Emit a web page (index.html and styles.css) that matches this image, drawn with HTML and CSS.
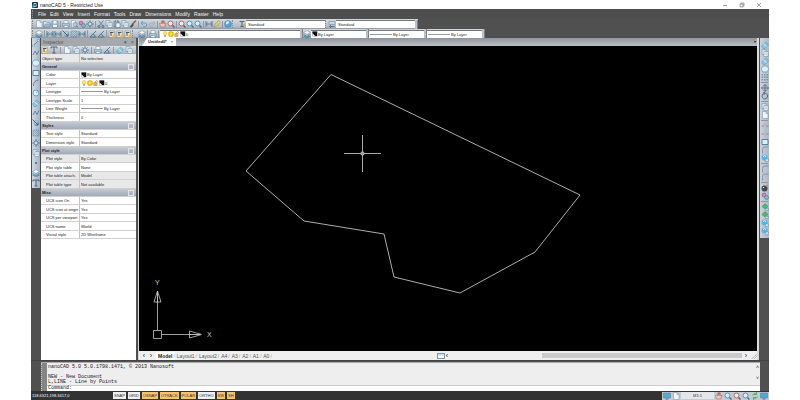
FILE: index.html
```html
<!DOCTYPE html>
<html lang="en">
<head>
<meta charset="utf-8">
<title>nanoCAD 5 - Restricted Use</title>
<link rel="stylesheet" href="styles.css">
</head>
<body>
<svg class="sprite" aria-hidden="true">
  <symbol id="page" viewBox="0 0 16 16"><path d="M3 1h7l4 4v10H3z" fill="#fff" stroke="#5b7f9c"/><path d="M10 1v4h4" fill="none" stroke="#5b7f9c"/></symbol>
  <symbol id="open" viewBox="0 0 16 16"><path d="M1 14V3h5l2 2h6v9z" fill="#dcebf5" stroke="#526f88"/><path d="M1 14l4-6h11l-3 6z" fill="#8fc3df" stroke="#526f88"/></symbol>
  <symbol id="save" viewBox="0 0 16 16"><path d="M2 2h12v12H2z" fill="#8dbad8" stroke="#48667e"/><path d="M5 2h6v5H5zM4 10h8v4H4z" fill="#fff"/></symbol>
  <symbol id="print" viewBox="0 0 16 16"><path d="M4 7V1h8v6" fill="#fff" stroke="#55758f"/><path d="M1 7h14v6H1z" fill="#9cc8e0" stroke="#55758f"/><path d="M4 11h8v4H4z" fill="#fff" stroke="#55758f"/></symbol>
  <symbol id="preview" viewBox="0 0 16 16"><path d="M3 1h8v13H3z" fill="#fff" stroke="#6b8ba5"/><circle cx="10" cy="9" r="4" fill="#a6d9f2" stroke="#456"/><path d="M13 12l3 3" stroke="#456" stroke-width="2"/></symbol>
  <symbol id="globe" viewBox="0 0 16 16"><circle cx="8" cy="8" r="7" fill="#3c9cdd" stroke="#2673ac"/><path d="M4 4q4-3 7 0l-3 4-4 1z" fill="#d5f0ff"/></symbol>
  <symbol id="palette" viewBox="0 0 16 16"><circle cx="6" cy="6" r="4" fill="#d878b0" stroke="#725"/><circle cx="11" cy="11" r="4" fill="#76b5da" stroke="#257"/></symbol>
  <symbol id="gear" viewBox="0 0 16 16"><circle cx="8" cy="8" r="4" fill="#cce5f2" stroke="#4f7692" stroke-width="2"/><path d="M8 0v4M8 12v4M0 8h4M12 8h4M3 3l2 2M11 11l2 2M13 3l-2 2M5 11l-2 2" stroke="#4f7692" stroke-width="2"/></symbol>
  <symbol id="cut" viewBox="0 0 16 16"><path d="M3 1l8 10M13 1L5 11" stroke="#4b80a5" stroke-width="2"/><circle cx="4" cy="13" r="2" fill="none" stroke="#315b7e" stroke-width="2"/><circle cx="12" cy="13" r="2" fill="none" stroke="#315b7e" stroke-width="2"/></symbol>
  <symbol id="copy" viewBox="0 0 16 16"><path d="M2 1h8v10H2z" fill="#d8eefb" stroke="#4d7898"/><path d="M6 5h8v10H6z" fill="#fff" stroke="#4d7898"/><path d="M8 8h4M8 11h4" stroke="#6ba4c8"/></symbol>
  <symbol id="paste" viewBox="0 0 16 16"><path d="M2 2h10v12H2z" fill="#72b8dd" stroke="#456"/><path d="M6 6h8v9H6z" fill="#fff" stroke="#456"/><path d="M5 0h4v4H5z" fill="#ddd" stroke="#456"/></symbol>
  <symbol id="brush" viewBox="0 0 16 16"><path d="M14 1L7 8" stroke="#704532" stroke-width="3"/><path d="M7 7l3 3-5 5-4-1z" fill="#333"/></symbol>
  <symbol id="undo" viewBox="0 0 16 16"><path d="M6 2L2 6l4 4M2 6h8q5 1 3 6-2 3-7 2" fill="none" stroke="#4a97c4" stroke-width="2"/></symbol>
  <symbol id="redo" viewBox="0 0 16 16"><path d="M10 2l4 4-4 4M14 6H6q-5 1-3 6 2 3 7 2" fill="none" stroke="#9caab5" stroke-width="2"/></symbol>
  <symbol id="zoomred" viewBox="0 0 16 16"><circle cx="7" cy="7" r="5" fill="#eef6fa" stroke="#a95757" stroke-width="2"/><path d="M11 11l4 4" stroke="#713a40" stroke-width="3"/></symbol>
  <symbol id="zoom" viewBox="0 0 16 16"><circle cx="7" cy="7" r="5" fill="#e1f5ff" stroke="#4089b2" stroke-width="2"/><path d="M11 11l4 4" stroke="#315f7c" stroke-width="3"/></symbol>
  <symbol id="hand" viewBox="0 0 16 16"><path d="M3 14L1 7l2-1 2 2V2h2v5-6h2v6-5h2v6l3-2-2 8z" fill="#f4c7ac" stroke="#9d4543"/></symbol>
  <symbol id="dim" viewBox="0 0 16 16"><path d="M2 2v12M14 2v12M2 8h12M5 5L2 8l3 3M11 5l3 3-3 3" fill="none" stroke="#426e91" stroke-width="2"/></symbol>
  <symbol id="pencil" viewBox="0 0 16 16"><path d="M2 14l1-4 8-9 4 3-9 9z" fill="#f5d24d" stroke="#866828"/></symbol>
  <symbol id="textstyle" viewBox="0 0 16 16"><path d="M3 3h10M8 3v10M5 13h6" stroke="#344c61" stroke-width="2"/><path d="M11 9l4 4" stroke="#d29a34" stroke-width="3"/></symbol>
  <symbol id="dimstyle" viewBox="0 0 16 16"><path d="M2 3h12v6H2z" fill="#c9dce9" stroke="#527088"/><path d="M3 13h10M6 11l-3 2 3 2" fill="none" stroke="#3f5f79" stroke-width="2"/></symbol>
  <symbol id="layers" viewBox="0 0 16 16"><path d="M1 5l7-4 7 4-7 4z" fill="#fff" stroke="#4e7895"/><path d="M1 9l7 4 7-4M1 12l7 3 7-3" fill="none" stroke="#347da9" stroke-width="2"/></symbol>
  <symbol id="angle" viewBox="0 0 16 16"><path d="M14 2L2 14h13M8 8q4 1 4 6" fill="none" stroke="#3d6788" stroke-width="2"/></symbol>
  <symbol id="radius" viewBox="0 0 16 16"><circle cx="9" cy="8" r="5" fill="none" stroke="#76aacb" stroke-width="2"/><path d="M1 1l11 11M12 7v5H7" fill="none" stroke="#334f69" stroke-width="2"/></symbol>
  <symbol id="hatch" viewBox="0 0 16 16"><path d="M2 2h12v12H2zM2 6l4-4M2 10l8-8M2 14L14 2M6 14l8-8M10 14l4-4" fill="none" stroke="#477aa0"/></symbol>
  <symbol id="docgold" viewBox="0 0 16 16"><path d="M2 2h11v13H2z" fill="#fff4c7" stroke="#687782"/><path d="M4 5h7M6 5v7" stroke="#334" stroke-width="2"/><path d="M9 9h6v6H9z" fill="#edb83f"/></symbol>
  <symbol id="line" viewBox="0 0 16 16"><path d="M3 13L13 3" stroke="#4b7b9d" stroke-width="2"/><path d="M1 12h4v4H1zM11 1h4v4h-4z" fill="#bfe8fa" stroke="#678ca5"/></symbol>
  <symbol id="poly" viewBox="0 0 16 16"><path d="M2 12L6 4l4 7 4-8" fill="none" stroke="#47799c" stroke-width="2"/></symbol>
  <symbol id="hex" viewBox="0 0 16 16"><path d="M4 2h8l4 6-4 6H4L0 8z" fill="#e5f8ff" stroke="#69a4c8" stroke-width="2"/></symbol>
  <symbol id="rect" viewBox="0 0 16 16"><path d="M2 3h12v10H2z" fill="#e5f8ff" stroke="#456f90" stroke-width="2"/></symbol>
  <symbol id="arc" viewBox="0 0 16 16"><path d="M3 14Q2 4 13 2" fill="none" stroke="#668" stroke-width="2"/></symbol>
  <symbol id="circle" viewBox="0 0 16 16"><circle cx="8" cy="8" r="6" fill="#e8faff" stroke="#4c9bc4" stroke-width="2"/><path d="M8 8l4-3" stroke="#456"/></symbol>
  <symbol id="dot" viewBox="0 0 16 16"><circle cx="8" cy="8" r="2" fill="#345"/></symbol>
  <symbol id="text" viewBox="0 0 16 16"><path d="M2 5V2h12v3M8 2v12M5 14h6" fill="none" stroke="#344b61" stroke-width="2"/></symbol>
  <symbol id="move" viewBox="0 0 16 16"><path d="M8 1v14M1 8h14M5 4l3-3 3 3M5 12l3 3 3-3M4 5L1 8l3 3M12 5l3 3-3 3" fill="none" stroke="#4c6077" stroke-width="2"/></symbol>
  <symbol id="rotate" viewBox="0 0 16 16"><path d="M11 3q5 5 0 10-7 3-9-4-1-6 6-7M4 0l5 2-4 4" fill="none" stroke="#405b74" stroke-width="2"/></symbol>
  <symbol id="erase" viewBox="0 0 16 16"><path d="M1 10L9 2l6 5-7 8H4z" fill="#75c7eb" stroke="#537f9b"/><path d="M5 6l6 5" stroke="#fff" stroke-width="2"/></symbol>
  <symbol id="array" viewBox="0 0 16 16"><path d="M1 2h3v3H1zM6 2h3v3H6zM11 2h3v3h-3zM1 7h3v3H1zM6 7h3v3H6zM11 7h3v3h-3zM1 12h3v3H1zM6 12h3v3H6zM11 12h3v3h-3z" fill="#718ba1"/></symbol>
  <symbol id="trim" viewBox="0 0 16 16"><path d="M1 8h5M10 8h5" stroke="#b66c75" stroke-width="2"/><path d="M8 1v14" stroke="#8daabd"/></symbol>
  <symbol id="fillet" viewBox="0 0 16 16"><path d="M3 15V7q0-5 5-5h7" fill="none" stroke="#778ba0" stroke-width="2"/><path d="M3 2h4" stroke="#aaa"/></symbol>
  <symbol id="bomb" viewBox="0 0 16 16"><circle cx="7" cy="9" r="6" fill="#222b32"/><path d="M10 5l4-3" stroke="#db6c2c" stroke-width="3"/><circle cx="5" cy="7" r="1.5" fill="#fff"/></symbol>
  <symbol id="green" viewBox="0 0 16 16"><path d="M8 1l6 6-6 5-6-5z" fill="#32b454" stroke="#1c7b37"/><path d="M9 11h6v4H9z" fill="#b9def0" stroke="#57819c"/></symbol>
  <symbol id="bluebox" viewBox="0 0 16 16"><circle cx="7" cy="7" r="6" fill="#49aee0"/><path d="M4 5q3-4 6 0" fill="none" stroke="#fff" stroke-width="2"/><path d="M9 10h6v5H9z" fill="#d9eefa" stroke="#57819c"/></symbol>
  <symbol id="refresh" viewBox="0 0 16 16"><path d="M3 7q2-6 8-3M13 9q-2 6-8 3M11 0v5H6M5 16v-5h5" fill="none" stroke="#3ba352" stroke-width="2"/></symbol>
  <symbol id="monitor" viewBox="0 0 16 16"><path d="M1 2h14v10H1z" fill="#3c9ed5" stroke="#35657f"/><path d="M5 14h6" stroke="#456" stroke-width="2"/></symbol>
  <symbol id="bulb" viewBox="0 0 16 16"><circle cx="8" cy="6" r="5" fill="#ffe76a" stroke="#c7a52d"/><path d="M6 11h4v4H6z" fill="#777"/></symbol>
  <symbol id="sun" viewBox="0 0 16 16"><circle cx="8" cy="8" r="6" fill="#ffe44b" stroke="#e1a900" stroke-width="3"/></symbol>
  <symbol id="lock" viewBox="0 0 16 16"><path d="M7 8V4q3-5 6 0v2" fill="none" stroke="#9a7740" stroke-width="2"/><path d="M2 7h9v8H2z" fill="#e9b75e" stroke="#97642b"/></symbol>
  <symbol id="swatch" viewBox="0 0 16 16"><path d="M1 1h13v13H1z" fill="#111"/><path d="M1 6l8 8H1z" fill="#fff"/></symbol>
</svg>

<div class="app">
  <header class="titlebar">
    <svg class="logo" viewBox="0 0 16 16" aria-hidden="true"><rect width="16" height="16" rx="2" fill="#17384f"/><path d="M5 4h6v8H5z" fill="none" stroke="#d9f2ff" stroke-width="2"/><path d="M1 9h5v6H1z" fill="#39a6d9"/></svg>
    <h1>nanoCAD 5 - Restricted Use</h1>
    <div class="window-buttons">
      <button aria-label="Minimize"><svg viewBox="0 0 6 6"><path d="M1 3.500h4"/></svg></button>
      <button aria-label="Restore"><svg viewBox="0 0 6 6"><path d="M1 2h3v3H1zM2 2V1h3v3H4"/></svg></button>
      <button aria-label="Close"><svg viewBox="0 0 6 6"><path d="M1 1l4 4M5 1L1 5"/></svg></button>
    </div>
  </header>

  <nav class="menu">
    <span class="grip"></span>
    <button>File</button><button>Edit</button><button>View</button><button>Insert</button><button>Format</button><button>Tools</button><button>Draw</button><button>Dimensions</button><button>Modify</button><button>Raster</button><button>Help</button>
  </nav>

  <div class="toolbars">
    <div class="toolbar">
      <span class="grip"></span>
      <div class="tools" data-tools="page open save | print preview palette gear | cut copy paste copy brush | undo redo | hand zoomred | zoomred zoom zoom | dim pencil | globe"></div>
      <span class="grip wide"></span>
      <div class="tools" data-tools="textstyle"></div>
      <select class="combo style" aria-label="Text style"><option>Standard</option></select>
      <span class="grip"></span>
      <div class="tools" data-tools="dimstyle"></div>
      <select class="combo style" aria-label="Dimension style"><option>Standard</option></select>
      <span class="cap"></span>
    </div>
    <div class="toolbar">
      <span class="grip"></span>
      <div class="tools" data-tools="layers | dim dim radius hatch dim | angle angle | docgold docgold docgold"></div>
      <span class="grip wide"></span>
      <div class="tools" data-tools="layers | print |"></div>
      <label class="combo layer">
        <svg><use href="#bulb"/></svg><svg><use href="#sun"/></svg><svg><use href="#lock"/></svg><svg><use href="#swatch"/></svg>
        <select aria-label="Layer"><option>0</option></select>
      </label>
      <span class="cap"></span>
      <div class="tools" data-tools="layers"></div>
      <label class="combo prop"><svg><use href="#swatch"/></svg><select aria-label="Color"><option>By Layer</option></select></label>
      <span class="cap"></span>
      <label class="combo prop"><span class="rule"></span><select aria-label="Linetype"><option>By Layer</option></select></label>
      <span class="cap"></span>
      <label class="combo prop"><span class="rule"></span><select aria-label="Line weight"><option>By Layer</option></select></label>
      <span class="cap"></span>
    </div>
  </div>

  <main class="work">
    <div class="rail"><div class="tools" data-tools="line poly hex rect arc circle erase poly radius hatch gear copy dot layers text"></div></div>

    <aside class="inspector">
      <header><h2>Inspector</h2><button aria-label="Pin">&#9662;</button><button aria-label="Close inspector">&#215;</button></header>
      <div class="tools inspector-tools" data-tools="docgold text | page copy gear | print angle | erase copy"></div>
      <table>
        <tbody class="shade"><tr><th>Object type</th><td>No selection</td></tr></tbody>
        <tbody>
          <tr class="group"><th colspan="2"><div>General</div></th></tr>
          <tr><th>Color</th><td><div><svg><use href="#swatch"/></svg>By Layer</div></td></tr>
          <tr><th>Layer</th><td><div><svg><use href="#bulb"/></svg><svg><use href="#sun"/></svg><svg><use href="#lock"/></svg><svg><use href="#swatch"/></svg>0</div></td></tr>
          <tr><th>Linetype</th><td><div><span class="rule"></span>By Layer</div></td></tr>
          <tr><th>Linetype Scale</th><td>1</td></tr>
          <tr><th>Line Weight</th><td><div><span class="rule"></span>By Layer</div></td></tr>
          <tr><th>Thickness</th><td>0</td></tr>
        </tbody>
        <tbody>
          <tr class="group"><th colspan="2"><div>Styles</div></th></tr>
          <tr><th>Text style</th><td>Standard</td></tr>
          <tr><th>Dimension style</th><td>Standard</td></tr>
        </tbody>
        <tbody>
          <tr class="group"><th colspan="2"><div>Plot style</div></th></tr>
          <tr class="shade"><th>Plot style</th><td>By Color</td></tr>
          <tr><th>Plot style table</th><td>None</td></tr>
          <tr class="shade"><th>Plot table attach.</th><td>Model</td></tr>
          <tr class="shade"><th>Plot table type</th><td>Not available</td></tr>
        </tbody>
        <tbody>
          <tr class="group"><th colspan="2"><div>Misc</div></th></tr>
          <tr><th>UCS icon On</th><td>Yes</td></tr>
          <tr><th>UCS icon at origin</th><td>Yes</td></tr>
          <tr><th>UCS per viewport</th><td>Yes</td></tr>
          <tr><th>UCS name</th><td>World</td></tr>
          <tr><th>Visual style</th><td>2D Wireframe</td></tr>
        </tbody>
      </table>
    </aside>

    <section class="document">
      <div class="doc-tabs"><button class="doc-tab"><b>Untitled0*</b><span>&#215;</span></button><button class="doc-list" aria-label="Open documents">&#9662;</button></div>
      <div class="canvas">
        <svg viewBox="0 0 618 305" preserveAspectRatio="xMinYMin meet" role="img" aria-label="Drawing">
          <path class="shape" d="M192 28.500L441 149 396 206 321 247 255 231 245 188 165 175 107 125Z"/>
          <path class="cross" d="M205 107.500h37M223.500 89v37"/><rect x="222" y="106" width="3" height="3" class="pick"/>
          <path class="axis" d="M14.500 284.500h8v8h-8zM18.500 284V245M22.500 288.500H61M18.500 245l-3.500 11h7zM62.500 288.500l-12-3.500v7zM18.500 246v10M51 288.500h10"/>
          <text x="16" y="239">Y</text><text x="68" y="291">X</text>
        </svg>
      </div>
      <div class="layouts">
        <button aria-label="Previous">&#8249;</button><button aria-label="Next">&#8250;</button>
        <div class="sheets"><button class="current">Model</button><button>Layout1</button><button>Layout2</button><button>A4</button><button>A3</button><button>A2</button><button>A1</button><button>A0</button></div>
        <button class="split" aria-label="Split"></button>
        <div class="scroll"><button aria-label="Scroll left">&#8249;</button><span class="thumb"></span><button aria-label="Scroll right">&#8250;</button></div>
        <svg class="corner" viewBox="0 0 8 8"><path d="M1 8l7-7M4 8l4-4"/></svg>
      </div>
    </section>

    <div class="rail right"><div class="tools" data-tools="erase copy erase hex array | move rotate | copy page | trim trim rect fillet bluebox | fillet fillet | bomb palette | green green bluebox bluebox"></div></div>
  </main>

  <section class="console">
    <span class="handle"></span>
    <div class="log">
      <div class="lines"><pre>nanoCAD 5.0 5.0.1798.1471, © 2013 Nanosoft

NEW - New Document
L,LINE - Line by Points</pre><div class="vscroll"><span>&#708;</span><span>&#709;</span></div></div>
      <label>Command:<input aria-label="Command"></label>
    </div>
  </section>

  <footer class="status">
    <output>118.6321,198.3417,0</output>
    <div class="modes"><button>SNAP</button><button>GRID</button><button class="on">OSNAP</button><button class="on">OTRACK</button><button class="on">POLAR</button><button>ORTHO</button><button class="on">SW</button><button class="on">SH</button></div>
    <div class="view-tools">
      <div class="tools" data-tools="monitor page"></div>
      <button class="scale">M1:1</button>
      <div class="tools" data-tools="hand zoom zoomred zoom refresh monitor"></div>
    </div>
  </footer>
</div>
<script src="toolbar.js"></script>
</body>
</html>
```
FILE: styles.css
```css
* { box-sizing: border-box; }
body {
  margin: 0;
  background: #fff;
  font: 4px/8px "Liberation Sans", sans-serif;
  color: #222;
}
button, select, input {
  margin: 0; padding: 0; border: 0; border-radius: 0;
  background: none; color: inherit; font: inherit;
  appearance: none; outline: 0;
}
h1, h2, pre { margin: 0; font: inherit; }
.sprite { display: none; }
.app {
  display: flex; flex-direction: column;
  height: 100vh; margin: 0 31px;
  background: #505050;
}

.titlebar { display: flex; align-items: center; gap: 2px; height: 9px; padding-left: 1px; background: #fff; font-size: 5px; }
.logo { width: 6px; height: 6px; }
.window-buttons { display: flex; gap: 11px; margin-left: auto; padding-right: 7px; }
.window-buttons button { display: flex; }
.window-buttons svg { width: 6px; height: 6px; fill: none; stroke: #777; stroke-width: .7; }

.menu { display: flex; align-items: center; height: 10px; background: #4e4e4e; color: #f2f2f2; font-size: 5px; }
.menu button { padding: 0 2px; }
.grip { flex: none; width: 3px; height: 8px; border-left: 1px dotted #858c93; }
.grip.wide { width: 6px; }
.menu .grip { width: 4px; margin-left: 1px; }

.toolbar { display: flex; align-items: center; width: max-content; height: 10px; padding-left: 1px; background: linear-gradient(#d3d9df, #b2bac4 80%, #8a929c); }
.toolbar:last-child { height: 9px; }
.tools { display: flex; align-items: center; }
.tool { display: flex; flex: none; align-items: center; justify-content: center; width: 8px; height: 8px; }
.tool svg { width: 8px; height: 8px; opacity: .8; }
.sep { flex: none; width: 1px; height: 7px; margin: 0 1px; background: #9098a2; }
.combo { display: flex; align-items: center; height: 8px; padding: 0 1px; background: #fff; border-top: 1px solid #777; }
.combo svg, td svg { flex: none; width: 6px; height: 6px; }
.combo select { flex: 1; min-width: 0; line-height: 7px; }
.style { width: 79px; padding-left: 2px; }
.layer { width: 140px; padding-left: 2px; }
.prop { width: 55px; }
.cap { width: 3px; height: 9px; border-right: 1px solid #7d848c; background: #b9c1cb; }
.rule { flex: none; width: 22px; height: 1px; margin-right: 1px; background: #999; }

.work { display: flex; flex: 1; min-height: 0; border-bottom: 1px solid #444; }
.rail { flex: none; width: 9px; padding-left: 1px; }
.rail .tools { flex-direction: column; gap: 2px; padding: 1px 0; background: linear-gradient(90deg, #d2dae4, #a6b4c6); }
.rail .sep { width: 7px; height: 1px; margin: 1px 0; }
.rail.right { width: 10px; padding: 0 0 0 1px; background: #505050; }
.rail.right .tools { gap: 0; padding: 3px 0; background: linear-gradient(90deg, #cbd3dc, #adb8c5); }

.inspector { flex: none; width: 95px; margin-left: 1px; background: #fff; }
.inspector header { display: flex; height: 8px; padding: 0 2px; background: #a5a8ac; color: #555; gap: 4px; font-size: 5px; }
.inspector h2 { flex: 1; }
.inspector-tools { gap: 1px; height: 8px; background: linear-gradient(#dce1e7, #a9b2bd); }
table { width: 100%; border-collapse: separate; border-spacing: 0; table-layout: fixed; }
tr { height: 8px; }
tbody tr:nth-child(odd) { height: 9px; }
tbody tr.group:nth-child(odd) { height: 8px; }
th, td { height: 8px; padding: 0 0 0 1px; border-bottom: 1px solid #d0d0d0; font-weight: normal; text-align: left; line-height: 7px; white-space: nowrap; }
th:first-child { width: 39px; padding-left: 5px; border-right: 1px solid #c4c4c4; }
td div, .group div { display: flex; align-items: center; height: 7px; }
.shade th, .shade td { background: #e8e8e8; }
tbody.shade th:first-child { padding-left: 1px; }
.group th:first-child { padding-left: 1px; border-right: 0; background: linear-gradient(#c5cad3, #a2aab7); font-weight: bold; }
.group div { justify-content: space-between; padding-right: 2px; }
.group div::after { content: ""; width: 4px; height: 4px; border: 1px solid #e2e5ea; }

.document { display: flex; flex: 1; flex-direction: column; min-width: 0; margin-left: 2px; border-left: 1px solid #d4d4d4; border-right: 2px solid #dcdcdc; }
.doc-tabs { display: flex; height: 8px; padding-left: 3px; background: linear-gradient(#8e949b, #bcc1c7); }
.doc-tab { display: flex; gap: 4px; padding: 0 3px 0 6px; background: #fff; clip-path: polygon(5px 0, 100% 0, 100% 100%, 0 100%); }
.doc-list { margin-left: auto; padding-right: 1px; }
.canvas { flex: 1; min-height: 0; background: #000; }
.canvas svg { display: block; width: 100%; height: 100%; }
.shape { fill: none; stroke: #d8d8d8; stroke-width: .8; }
.cross { stroke: #aaa; }
.pick { fill: #999; stroke: #bbb; stroke-width: .5; }
.axis { fill: none; stroke: #c8c8c8; stroke-width: .8; }
.canvas text { fill: #ccc; font: 7px "Liberation Sans", sans-serif; }
.layouts { display: flex; align-items: center; height: 9px; padding-left: 3px; gap: 3px; background: #efefef; }
.layouts > button, .scroll button { width: 4px; font-size: 7px; line-height: 7px; }
.sheets { display: flex; flex: none; width: 278px; font-size: 5px; }
.sheets button { padding-left: 2px; color: #555; }
.sheets button::after { content: "/"; padding-left: 1px; color: #999; font-weight: normal; }
.sheets .current { font-weight: bold; color: #222; background: #fff; }
.layouts .split { width: 8px; height: 6px; border: 1px solid #7c95a9; background: linear-gradient(#d3e4ef 50%, #fff 50%); }
.scroll { display: flex; flex: 1; align-items: center; gap: 2px; margin-left: -3px; }
.thumb { width: 66%; height: 5px; margin-left: auto; background: #cacaca; }
.corner { width: 6px; height: 6px; fill: none; stroke: #aaa; }

.console { display: flex; height: 29px; margin: 1px 9px 0 10px; border-top: 1px solid #aaa; background: #eee; }
.handle { width: 6px; border-left: 1px dotted #ccc; background: #858585; }
.log { display: flex; flex: 1; flex-direction: column; min-width: 0; font: 5px/5px "Liberation Mono", monospace; }
.lines { display: flex; flex: 1; align-items: flex-end; justify-content: space-between; min-height: 0; overflow: hidden; padding-left: 1px; }
.vscroll { display: flex; flex-direction: column; justify-content: space-between; align-self: stretch; padding: 3px 1px; }
.log label { display: flex; align-items: center; height: 6px; padding-left: 1px; border-top: 1px solid #ccc; background: #fff; }
.log input { flex: 1; }

.status { display: flex; align-items: center; height: 9px; background: #333; color: #fff; }
.status output { width: 82px; padding-left: 1px; }
.modes { display: flex; gap: 2px; }
.modes button { height: 7px; padding: 0 1px; background: #eef0f2; color: #333; line-height: 7px; }
.modes .on { background: #f5c56c; }
.view-tools { display: flex; align-items: center; margin-left: auto; padding: 0 1px; background: #c5cbd2; }
.view-tools .tools { gap: 1px; }
.scale { width: 33px; margin: 0 1px; background: #e2e5e9; color: #333; line-height: 7px; }
```
FILE: toolbar.js
```js
// Fill every toolbar from its list of icon names; "|" adds a separator.
document.querySelectorAll("[data-tools]").forEach((bar) => {
  bar.innerHTML = bar.dataset.tools.split(" ").map((name) =>
    name === "|"
      ? '<span class="sep"></span>'
      : `<button class="tool" aria-label="${name}"><svg><use href="#${name}"/></svg></button>`
  ).join("");
});
```
